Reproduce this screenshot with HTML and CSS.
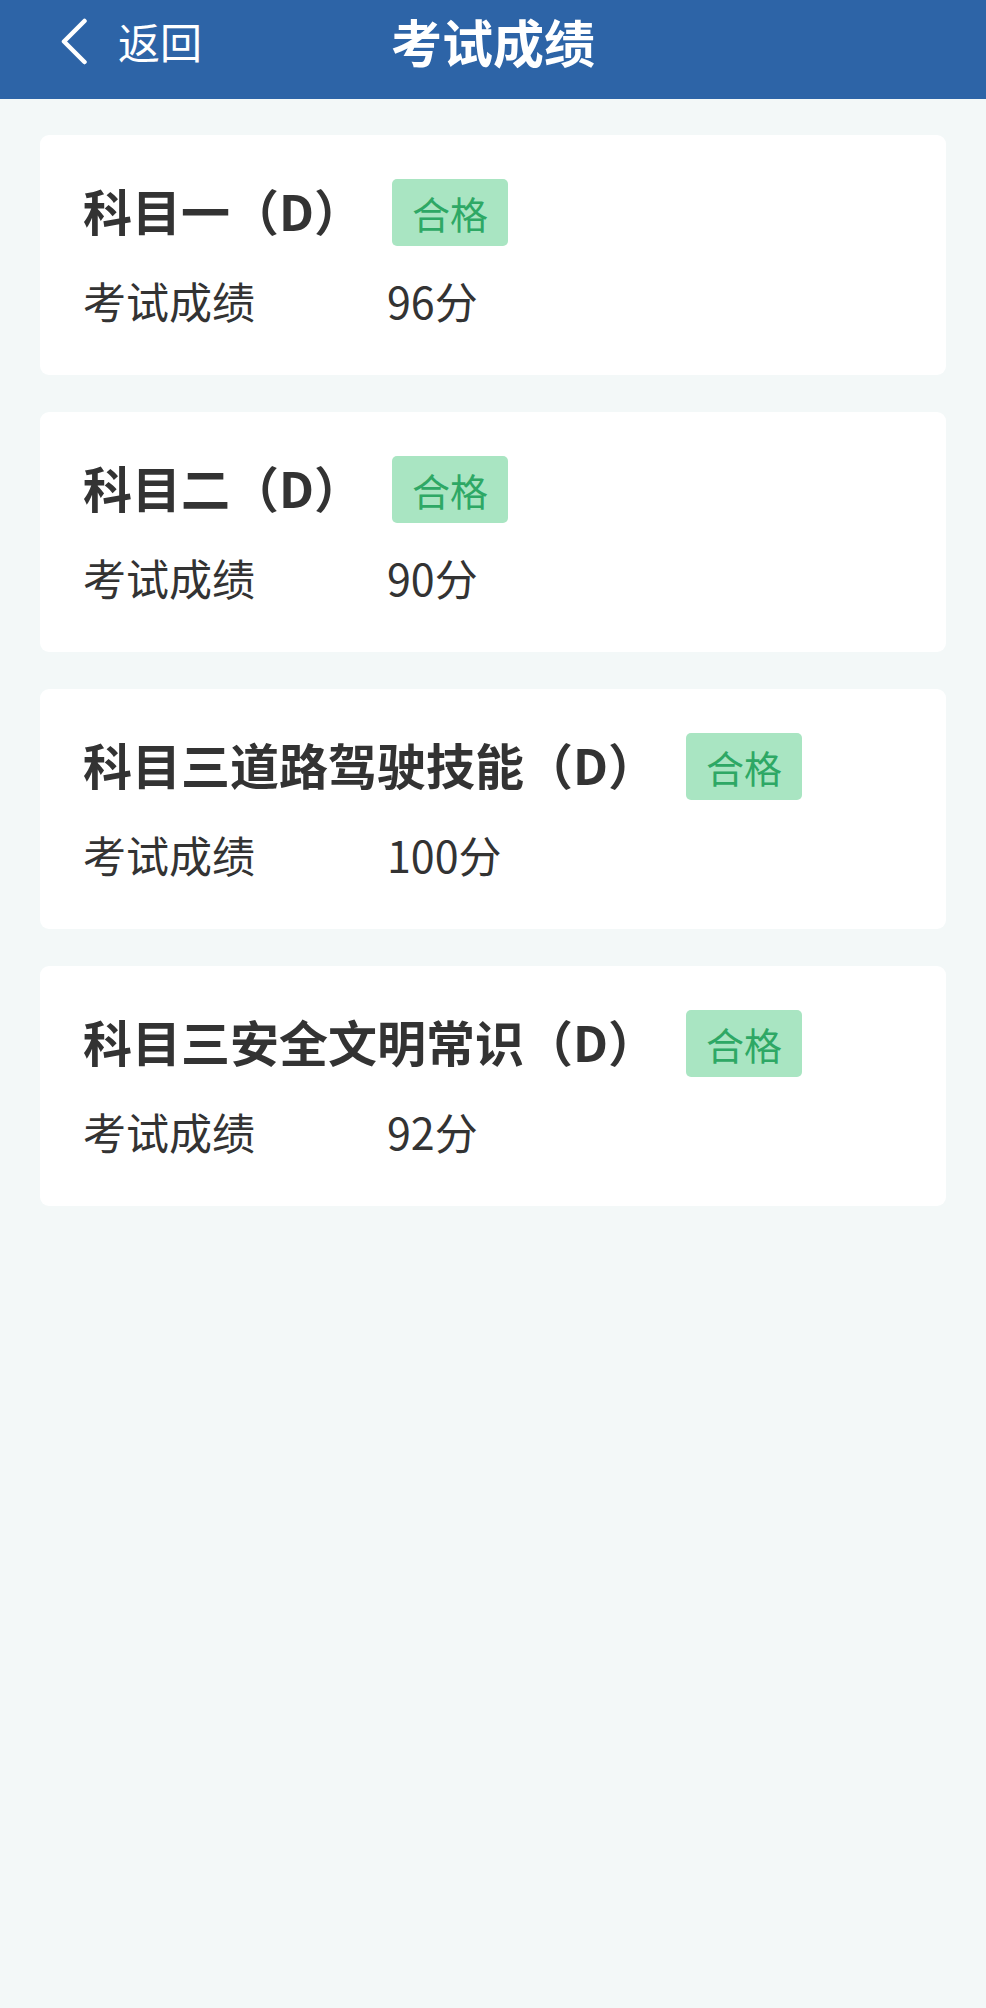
FILE: index.html
```html
<!DOCTYPE html>
<html lang="zh-CN">
<head>
    <meta charset="UTF-8">
    <meta name="viewport" content="width=device-width, initial-scale=1.0">
    <title>考试成绩</title>
    <link rel="stylesheet" href="styles.css">
</head>
<body>
    <div class="nav">
        <div class="nav-bar">
            <div class="back">
                <svg class="back-icon" viewBox="0 0 28 47" width="28" height="47">
                    <polyline points="24.5,3 4,23.5 24.5,44" fill="none" stroke="#fff" stroke-width="4.5" stroke-linecap="round" stroke-linejoin="round"/>
                </svg>
                <span class="back-text">返回</span>
            </div>
            <div class="nav-title">考试成绩</div>
            <div></div>
        </div>
    </div>

    <div class="list">
        <div class="card">
            <div class="card-head">
                <span class="subject">科目一（D）</span>
                <span class="tag">合格</span>
            </div>
            <div class="score-row">
                <span class="label">考试成绩</span>
                <span class="value">96分</span>
            </div>
        </div>

        <div class="card">
            <div class="card-head">
                <span class="subject">科目二（D）</span>
                <span class="tag">合格</span>
            </div>
            <div class="score-row">
                <span class="label">考试成绩</span>
                <span class="value">90分</span>
            </div>
        </div>

        <div class="card">
            <div class="card-head">
                <span class="subject">科目三道路驾驶技能（D）</span>
                <span class="tag">合格</span>
            </div>
            <div class="score-row">
                <span class="label">考试成绩</span>
                <span class="value">100分</span>
            </div>
        </div>

        <div class="card">
            <div class="card-head">
                <span class="subject">科目三安全文明常识（D）</span>
                <span class="tag">合格</span>
            </div>
            <div class="score-row">
                <span class="label">考试成绩</span>
                <span class="value">92分</span>
            </div>
        </div>
    </div>
</body>
</html>
```

FILE: styles.css
```css
body {
    margin: 0;
    background: #f3f8f8;
    font-family: "Noto Sans CJK SC", "Noto Sans", sans-serif;
    color: #333;
}
.nav {
    height: 99px;
    background: #2d64a7;
}
.nav-bar {
    height: 82px;
    display: grid;
    grid-template-columns: 1fr auto 1fr;
    align-items: center;
}
.back {
    display: flex;
    align-items: center;
    padding-left: 60px;
}
.back-icon {
    display: block;
}
.back-text {
    margin-left: 30px;
    font-size: 42px;
    color: #fff;
    line-height: 1;
}
.nav-title {
    font-size: 51px;
    font-weight: bold;
    color: #fff;
    line-height: 1;
}
.list {
    padding: 36px 40px;
    display: flex;
    flex-direction: column;
    gap: 37px;
}
.card {
    background: #fff;
    border-radius: 9px;
    padding: 44px 43px 46px;
}
.card-head {
    display: flex;
    align-items: center;
    height: 67px;
}
.subject {
    font-size: 49px;
    font-weight: bold;
    line-height: 1;
    padding-bottom: 6px;
}
.tag {
    margin-left: 29px;
    height: 67px;
    padding: 0 20px;
    display: flex;
    align-items: center;
    background: #a9e5c2;
    color: #2ea865;
    font-size: 38px;
    border-radius: 5px;
}
.score-row {
    display: flex;
    margin-top: 25px;
    height: 58px;
    align-items: center;
    font-size: 43px;
}
.label {
    width: 304px;
}
```
